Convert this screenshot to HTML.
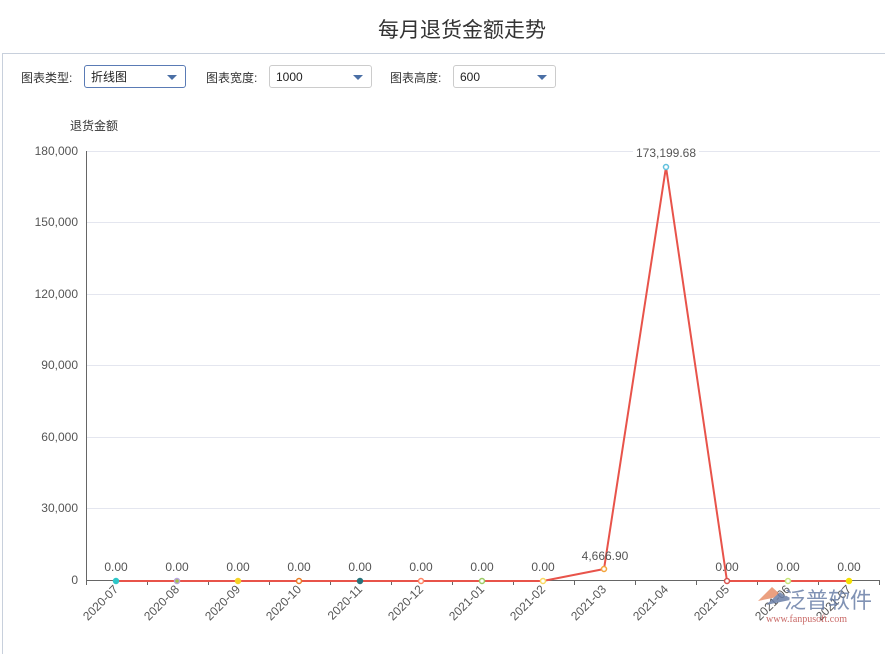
<!DOCTYPE html>
<html><head><meta charset="utf-8"><style>
body{margin:0;width:885px;height:628px;background:#fff;overflow:hidden;font-family:"Liberation Sans","Noto Sans CJK SC",sans-serif;position:relative}
.title{position:absolute;top:14px;left:0;width:924px;text-align:center;font-size:21px;color:#333}
.panel{position:absolute;left:2px;top:53px;width:900px;height:600px;border-left:1px solid #c8d0dc;border-top:1px solid #c8d0dc}
.lbl{position:absolute;top:69px;font-size:12px;color:#333}
.sel{position:absolute;top:65px;height:23px;border:1px solid #ccc;border-radius:3px;font-size:12px;color:#222;line-height:23px;padding-left:6px;box-sizing:border-box}
.sel:after{content:"";position:absolute;right:8px;top:9px;border-left:5px solid transparent;border-right:5px solid transparent;border-top:5px solid #4a6fa5}
svg{position:absolute;left:0;top:0}
</style></head><body>
<div class="title">每月退货金额走势</div>
<div class="panel"></div>
<div class="lbl" style="left:21px">图表类型:</div>
<div class="sel" style="left:84px;width:102px;border-color:#5a7bb5">折线图</div>
<div class="lbl" style="left:206px">图表宽度:</div>
<div class="sel" style="left:269px;width:103px">1000</div>
<div class="lbl" style="left:390px">图表高度:</div>
<div class="sel" style="left:453px;width:103px">600</div>
<svg width="885" height="628" font-family="Liberation Sans, Noto Sans CJK SC, sans-serif">
<text x="70" y="130" font-size="12" fill="#333">退货金额</text>
<g stroke="#e4e6ef" stroke-width="1">
<line x1="86" y1="151.5" x2="880" y2="151.5"/><line x1="86" y1="222.5" x2="880" y2="222.5"/>
<line x1="86" y1="294.5" x2="880" y2="294.5"/><line x1="86" y1="365.5" x2="880" y2="365.5"/>
<line x1="86" y1="437.5" x2="880" y2="437.5"/><line x1="86" y1="508.5" x2="880" y2="508.5"/>
</g>
<line x1="86.5" y1="151" x2="86.5" y2="581" stroke="#666"/>
<line x1="86" y1="580.5" x2="880" y2="580.5" stroke="#666"/>
<g stroke="#666">
<line x1="86.5" y1="580" x2="86.5" y2="585"/><line x1="147.5" y1="580" x2="147.5" y2="585"/><line x1="208.5" y1="580" x2="208.5" y2="585"/><line x1="269.5" y1="580" x2="269.5" y2="585"/><line x1="330.5" y1="580" x2="330.5" y2="585"/><line x1="391.5" y1="580" x2="391.5" y2="585"/><line x1="452.5" y1="580" x2="452.5" y2="585"/><line x1="513.5" y1="580" x2="513.5" y2="585"/><line x1="574.5" y1="580" x2="574.5" y2="585"/><line x1="635.5" y1="580" x2="635.5" y2="585"/><line x1="696.5" y1="580" x2="696.5" y2="585"/><line x1="757.5" y1="580" x2="757.5" y2="585"/><line x1="818.5" y1="580" x2="818.5" y2="585"/><line x1="879.5" y1="580" x2="879.5" y2="585"/>
</g>
<g font-size="12" fill="#555" text-anchor="end">
<text x="78" y="155">180,000</text><text x="78" y="226">150,000</text><text x="78" y="298">120,000</text>
<text x="78" y="369">90,000</text><text x="78" y="441">60,000</text><text x="78" y="512">30,000</text><text x="78" y="584">0</text>
</g>
<g font-size="12" fill="#555" text-anchor="end">
<text transform="translate(119,590) rotate(-45)">2020-07</text>
<text transform="translate(180,590) rotate(-45)">2020-08</text>
<text transform="translate(241,590) rotate(-45)">2020-09</text>
<text transform="translate(302,590) rotate(-45)">2020-10</text>
<text transform="translate(363,590) rotate(-45)">2020-11</text>
<text transform="translate(424,590) rotate(-45)">2020-12</text>
<text transform="translate(485,590) rotate(-45)">2021-01</text>
<text transform="translate(546,590) rotate(-45)">2021-02</text>
<text transform="translate(607,590) rotate(-45)">2021-03</text>
<text transform="translate(669,590) rotate(-45)">2021-04</text>
<text transform="translate(730,590) rotate(-45)">2021-05</text>
<text transform="translate(791,590) rotate(-45)">2021-06</text>
<text transform="translate(852,590) rotate(-45)">2021-07</text>
</g>
<polyline points="116,581 543,581 604,569 666,167 727,581 849,581" fill="none" stroke="#e8534a" stroke-width="2"/>
<g stroke-width="1.5" fill="#fff">
<circle cx="116" cy="581" r="2.5" stroke="#2ec7c9" fill="#2ec7c9"/>
<circle cx="177" cy="581" r="2.5" stroke="#b6a2de" fill="#a5c24a"/>
<circle cx="238" cy="581" r="2.5" stroke="#f5d327" fill="#f5d327"/>
<circle cx="299" cy="581" r="2.5" stroke="#e87c25"/>
<circle cx="360" cy="581" r="2.5" stroke="#27727b" fill="#27727b"/>
<circle cx="421" cy="581" r="2.5" stroke="#fe8463"/>
<circle cx="482" cy="581" r="2.5" stroke="#9bca63"/>
<circle cx="543" cy="581" r="2.5" stroke="#fad860"/>
<circle cx="604" cy="569" r="2.5" stroke="#f3a43b"/>
<circle cx="666" cy="167" r="2.5" stroke="#60c0dd"/>
<circle cx="727" cy="581" r="2.5" stroke="#d7504b"/>
<circle cx="788" cy="581" r="2.5" stroke="#c6e579"/>
<circle cx="849" cy="581" r="2.5" stroke="#f4e001" fill="#f4e001"/>
</g>
<rect x="633" y="145" width="66" height="15" fill="#fff"/>
<g font-size="12" fill="#555" text-anchor="middle">
<text x="116" y="571">0.00</text><text x="177" y="571">0.00</text><text x="238" y="571">0.00</text>
<text x="299" y="571">0.00</text><text x="360" y="571">0.00</text><text x="421" y="571">0.00</text>
<text x="482" y="571">0.00</text><text x="543" y="571">0.00</text><text x="605" y="560">4,666.90</text>
<text x="666" y="157">173,199.68</text><text x="727" y="571">0.00</text><text x="788" y="571">0.00</text><text x="849" y="571">0.00</text>
</g>
<g opacity="0.85">
<path d="M758 601 L772 587 L782 596 Z" fill="#e8906a"/>
<path d="M766 605 L780 592 L790 600 Z" fill="#6b7fa8"/>
<text x="784" y="608" font-size="22" fill="#6b7fa8">泛普软件</text>
<text x="766" y="622" font-size="10" font-family="Liberation Serif, serif" fill="#c0504d">www.fanpusoft.com</text>
</g>
</svg>
</body></html>
